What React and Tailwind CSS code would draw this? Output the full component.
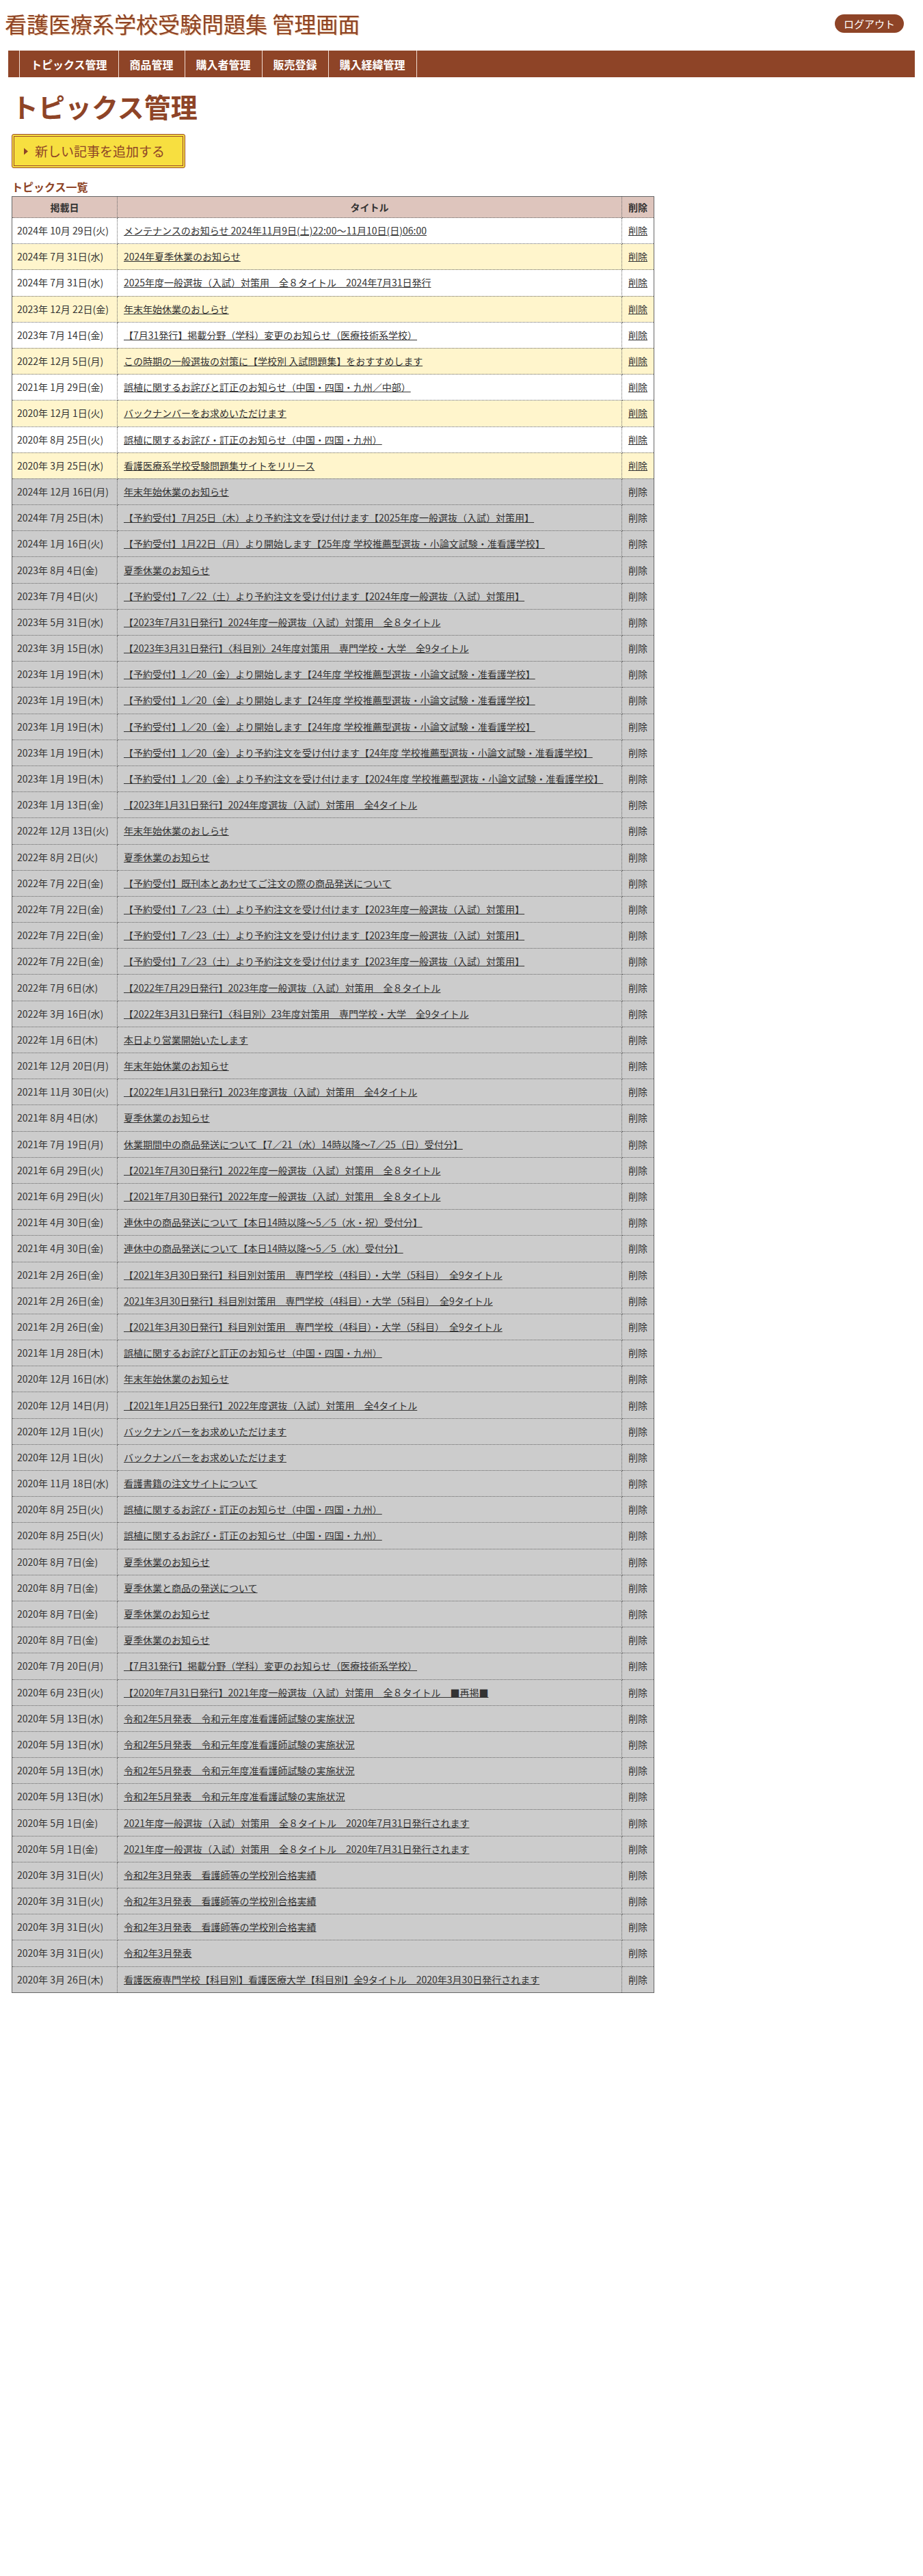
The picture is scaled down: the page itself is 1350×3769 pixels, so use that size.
import React from 'react';

const navItems = ['トピックス管理', '商品管理', '購入者管理', '販売登録', '購入経緯管理'];

const rows = [
  ['2024年 10月 29日(火)', 'メンテナンスのお知らせ 2024年11月9日(土)22:00～11月10日(日)06:00', true],
  ['2024年 7月 31日(水)', '2024年夏季休業のお知らせ', true],
  ['2024年 7月 31日(水)', '2025年度一般選抜（入試）対策用　全８タイトル　2024年7月31日発行', true],
  ['2023年 12月 22日(金)', '年末年始休業のおしらせ', true],
  ['2023年 7月 14日(金)', '【7月31発行】掲載分野（学科）変更のお知らせ（医療技術系学校）', true],
  ['2022年 12月 5日(月)', 'この時期の一般選抜の対策に【学校別 入試問題集】をおすすめします', true],
  ['2021年 1月 29日(金)', '誤植に関するお詫びと訂正のお知らせ（中国・四国・九州／中部）', true],
  ['2020年 12月 1日(火)', 'バックナンバーをお求めいただけます', true],
  ['2020年 8月 25日(火)', '誤植に関するお詫び・訂正のお知らせ（中国・四国・九州）', true],
  ['2020年 3月 25日(水)', '看護医療系学校受験問題集サイトをリリース', true],
  ['2024年 12月 16日(月)', '年末年始休業のお知らせ'],
  ['2024年 7月 25日(木)', '【予約受付】7月25日（木）より予約注文を受け付けます【2025年度一般選抜（入試）対策用】'],
  ['2024年 1月 16日(火)', '【予約受付】1月22日（月）より開始します【25年度 学校推薦型選抜・小論文試験・准看護学校】'],
  ['2023年 8月 4日(金)', '夏季休業のお知らせ'],
  ['2023年 7月 4日(火)', '【予約受付】7／22（土）より予約注文を受け付けます【2024年度一般選抜（入試）対策用】'],
  ['2023年 5月 31日(水)', '【2023年7月31日発行】2024年度一般選抜（入試）対策用　全８タイトル'],
  ['2023年 3月 15日(水)', '【2023年3月31日発行】〈科目別〉24年度対策用　専門学校・大学　全9タイトル'],
  ['2023年 1月 19日(木)', '【予約受付】1／20（金）より開始します【24年度 学校推薦型選抜・小論文試験・准看護学校】'],
  ['2023年 1月 19日(木)', '【予約受付】1／20（金）より開始します【24年度 学校推薦型選抜・小論文試験・准看護学校】'],
  ['2023年 1月 19日(木)', '【予約受付】1／20（金）より開始します【24年度 学校推薦型選抜・小論文試験・准看護学校】'],
  ['2023年 1月 19日(木)', '【予約受付】1／20（金）より予約注文を受け付けます【24年度 学校推薦型選抜・小論文試験・准看護学校】'],
  ['2023年 1月 19日(木)', '【予約受付】1／20（金）より予約注文を受け付けます【2024年度 学校推薦型選抜・小論文試験・准看護学校】'],
  ['2023年 1月 13日(金)', '【2023年1月31日発行】2024年度選抜（入試）対策用　全4タイトル'],
  ['2022年 12月 13日(火)', '年末年始休業のおしらせ'],
  ['2022年 8月 2日(火)', '夏季休業のお知らせ'],
  ['2022年 7月 22日(金)', '【予約受付】既刊本とあわせてご注文の際の商品発送について'],
  ['2022年 7月 22日(金)', '【予約受付】7／23（土）より予約注文を受け付けます【2023年度一般選抜（入試）対策用】'],
  ['2022年 7月 22日(金)', '【予約受付】7／23（土）より予約注文を受け付けます【2023年度一般選抜（入試）対策用】'],
  ['2022年 7月 22日(金)', '【予約受付】7／23（土）より予約注文を受け付けます【2023年度一般選抜（入試）対策用】'],
  ['2022年 7月 6日(水)', '【2022年7月29日発行】2023年度一般選抜（入試）対策用　全８タイトル'],
  ['2022年 3月 16日(水)', '【2022年3月31日発行】〈科目別〉23年度対策用　専門学校・大学　全9タイトル'],
  ['2022年 1月 6日(木)', '本日より営業開始いたします'],
  ['2021年 12月 20日(月)', '年末年始休業のお知らせ'],
  ['2021年 11月 30日(火)', '【2022年1月31日発行】2023年度選抜（入試）対策用　全4タイトル'],
  ['2021年 8月 4日(水)', '夏季休業のお知らせ'],
  ['2021年 7月 19日(月)', '休業期間中の商品発送について【7／21（水）14時以降～7／25（日）受付分】'],
  ['2021年 6月 29日(火)', '【2021年7月30日発行】2022年度一般選抜（入試）対策用　全８タイトル'],
  ['2021年 6月 29日(火)', '【2021年7月30日発行】2022年度一般選抜（入試）対策用　全８タイトル'],
  ['2021年 4月 30日(金)', '連休中の商品発送について【本日14時以降～5／5（水・祝）受付分】'],
  ['2021年 4月 30日(金)', '連休中の商品発送について【本日14時以降～5／5（水）受付分】'],
  ['2021年 2月 26日(金)', '【2021年3月30日発行】科目別対策用　専門学校（4科目）・大学（5科目）　全9タイトル'],
  ['2021年 2月 26日(金)', '2021年3月30日発行】科目別対策用　専門学校（4科目）・大学（5科目）　全9タイトル'],
  ['2021年 2月 26日(金)', '【2021年3月30日発行】科目別対策用　専門学校（4科目）・大学（5科目）　全9タイトル'],
  ['2021年 1月 28日(木)', '誤植に関するお詫びと訂正のお知らせ（中国・四国・九州）'],
  ['2020年 12月 16日(水)', '年末年始休業のお知らせ'],
  ['2020年 12月 14日(月)', '【2021年1月25日発行】2022年度選抜（入試）対策用　全4タイトル'],
  ['2020年 12月 1日(火)', 'バックナンバーをお求めいただけます'],
  ['2020年 12月 1日(火)', 'バックナンバーをお求めいただけます'],
  ['2020年 11月 18日(水)', '看護書籍の注文サイトについて'],
  ['2020年 8月 25日(火)', '誤植に関するお詫び・訂正のお知らせ（中国・四国・九州）'],
  ['2020年 8月 25日(火)', '誤植に関するお詫び・訂正のお知らせ（中国・四国・九州）'],
  ['2020年 8月 7日(金)', '夏季休業のお知らせ'],
  ['2020年 8月 7日(金)', '夏季休業と商品の発送について'],
  ['2020年 8月 7日(金)', '夏季休業のお知らせ'],
  ['2020年 8月 7日(金)', '夏季休業のお知らせ'],
  ['2020年 7月 20日(月)', '【7月31発行】掲載分野（学科）変更のお知らせ（医療技術系学校）'],
  ['2020年 6月 23日(火)', '【2020年7月31日発行】2021年度一般選抜（入試）対策用　全８タイトル　■再掲■'],
  ['2020年 5月 13日(水)', '令和2年5月発表　令和元年度准看護師試験の実施状況'],
  ['2020年 5月 13日(水)', '令和2年5月発表　令和元年度准看護師試験の実施状況'],
  ['2020年 5月 13日(水)', '令和2年5月発表　令和元年度准看護師試験の実施状況'],
  ['2020年 5月 13日(水)', '令和2年5月発表　令和元年度准看護試験の実施状況'],
  ['2020年 5月 1日(金)', '2021年度一般選抜（入試）対策用　全８タイトル　2020年7月31日発行されます'],
  ['2020年 5月 1日(金)', '2021年度一般選抜（入試）対策用　全８タイトル　2020年7月31日発行されます'],
  ['2020年 3月 31日(火)', '令和2年3月発表　看護師等の学校別合格実績'],
  ['2020年 3月 31日(火)', '令和2年3月発表　看護師等の学校別合格実績'],
  ['2020年 3月 31日(火)', '令和2年3月発表　看護師等の学校別合格実績'],
  ['2020年 3月 31日(火)', '令和2年3月発表'],
  ['2020年 3月 26日(木)', '看護医療専門学校【科目別】看護医療大学【科目別】全9タイトル　2020年3月30日発行されます'],
];

const App = () => {
  return (
    <div className="min-h-screen bg-white text-[#333] font-['Noto_Sans_CJK_JP',sans-serif]">
      {/* Header */}
      <div className="flex items-center justify-between h-[68px] pl-[7px] pr-[28px]">
        <h1 className="text-[32px] font-normal leading-none text-[#8e4427] [text-shadow:1px_1px_0_#efc49a]">
          看護医療系学校受験問題集 管理画面
        </h1>
        <button className="h-[27px] w-[101px] rounded-full bg-[#8e4427] text-white text-[15px] leading-none">
          ログアウト
        </button>
      </div>

      {/* Navigation */}
      <nav className="mx-[12px] mt-[6px] h-[39px] bg-[#8e4427] pl-[16px] flex">
        {navItems.map((item, i) => (
          <a
            key={item}
            href="#"
            className={
              'flex items-center px-[16px] border-l border-[#f1dcd2] text-white font-bold text-[16px] ' +
              (i === navItems.length - 1 ? 'border-r' : '')
            }
          >
            {item}
          </a>
        ))}
      </nav>

      <div className="px-[17px]">
        <h2 className="mt-[19px] text-[39px] font-bold leading-[47px] text-[#8e4427]">トピックス管理</h2>

        {/* Add button */}
        <div className="mt-[17px] w-[254px] h-[50px] rounded-[3px] border border-[#9b4a2a] bg-[#f7df40] p-[2px]">
          <a href="#" className="h-full flex items-center gap-[9px] border border-[#9b4a2a] pl-[13px] text-[#8e4427] text-[19px]">
            <svg width="8" height="11" viewBox="0 0 8 11">
              <path d="M1 0.5 L7 5.5 L1 10.5 Z" fill="#8e4427" />
            </svg>
            <span>新しい記事を追加する</span>
          </a>
        </div>

        <h3 className="mt-[16px] mb-[3px] text-[16px] font-bold leading-[22px] text-[#8e4427]">トピックス一覧</h3>

        <table className="w-[940px] border-collapse border border-[#666] text-[14px]">
          <thead>
            <tr className="bg-[#dec5bd] h-[31px]">
              <th className="w-[154px] border border-dotted border-[#666] font-bold">掲載日</th>
              <th className="border border-dotted border-[#666] font-bold">タイトル</th>
              <th className="w-[47px] border border-dotted border-[#666] font-bold">削除</th>
            </tr>
          </thead>
          <tbody>
            {rows.map(([date, title, pub], i) => (
              <tr
                key={i}
                className={pub ? (i % 2 === 0 ? 'bg-white' : 'bg-[#fff5cc]') : 'bg-[#cccccc]'}
              >
                <td className="h-[38.2px] px-[7px] border border-dotted border-[#666] whitespace-nowrap">{date}</td>
                <td className="px-[9px] border border-dotted border-[#666] whitespace-nowrap">
                  <a href="#" className="underline">{title}</a>
                </td>
                <td className="px-[8px] text-center border border-dotted border-[#666]">
                  {pub ? <a href="#" className="underline">削除</a> : <span>削除</span>}
                </td>
              </tr>
            ))}
          </tbody>
        </table>
      </div>
    </div>
  );
};

export default App;
